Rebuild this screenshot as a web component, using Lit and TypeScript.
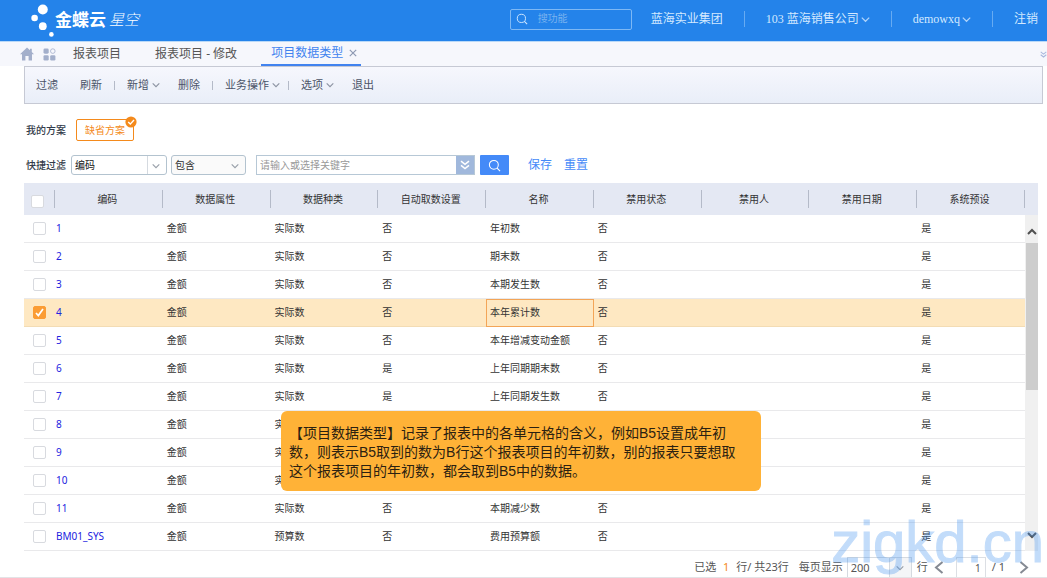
import { LitElement, html, css, svg } from "lit";
import { customElement, state } from "lit/decorators.js";
import { classMap } from "lit/directives/class-map.js";

interface Row {
  code: string;
  attr: string;
  kind: string;
  auto: string;
  name: string;
  disabled: string;
  preset: string;
}

const row = (code: string, name: string, auto = "否", kind = "实际数"): Row => ({
  code,
  attr: "金额",
  kind,
  auto,
  name,
  disabled: "否",
  preset: "是",
});

const ROWS: Row[] = [
  row("1", "年初数"),
  row("2", "期末数"),
  row("3", "本期发生数"),
  row("4", "本年累计数"),
  row("5", "本年增减变动金额"),
  row("6", "上年同期期末数", "是"),
  row("7", "上年同期发生数", "是"),
  row("8", "本年发生数"),
  row("9", "本期借方数"),
  row("10", "本期增加数"),
  row("11", "本期减少数"),
  row("BM01_SYS", "费用预算额", "否", "预算数"),
];

const COLUMNS = ["编码", "数据属性", "数据种类", "自动取数设置", "名称", "禁用状态", "禁用人", "禁用日期", "系统预设"];

const chevron = (w = 8) => html`<svg class="chevron" width=${w} height=${w} viewBox="0 0 8 8" aria-hidden="true">
  <path d="M0.7 2.3 4 5.6 7.3 2.3" fill="none" stroke="currentColor" stroke-width="1.1" />
</svg>`;

const magnifier = (size: number) => html`<svg width=${size} height=${size} viewBox="0 0 14 14" aria-hidden="true">
  <circle cx="6.3" cy="6.3" r="4.8" fill="none" stroke="currentColor" stroke-width="1.1" />
  <path d="M9.8 9.8 13 13" stroke="currentColor" stroke-width="1.2" />
</svg>`;

const doubleChevron = (size: number) => html`<svg width=${size} height=${size} viewBox="0 0 10 10" aria-hidden="true">
  ${svg`<path d="M1 1.2 5 4.4 9 1.2M1 5.4 5 8.6 9 5.4" fill="none" stroke="currentColor" stroke-width="1.5" />`}
</svg>`;

@customElement("app-root")
export class AppRoot extends LitElement {
  @state() private selected = new Set<string>(["4"]);

  static styles = css`
    :host {
      display: block;
      background: #fff;
      color: #333;
      font: 10px/16px "Noto Sans", "Noto Sans CJK SC", sans-serif;
    }
    * {
      box-sizing: border-box;
    }
    button,
    input,
    select {
      font: inherit;
      color: inherit;
      margin: 0;
      padding: 0;
      border: 0;
      background: none;
      border-radius: 0;
      outline: none;
    }
    button {
      cursor: pointer;
    }
    select {
      appearance: none;
      width: 100%;
      height: 100%;
    }
    a {
      text-decoration: none;
      color: inherit;
    }
    svg {
      display: block;
      flex: none;
    }
    .banner {
      display: flex;
      align-items: center;
      height: 42px;
      padding: 0 9px 3px 30px;
      border-bottom: 1px solid #b9d9f8;
      background: #2483ea;
      color: #d3e9ff;
      font-family: "Liberation Serif", "Noto Sans CJK SC", serif;
      font-size: 12px;
      white-space: nowrap;
    }
    .brand {
      display: flex;
      align-items: center;
      margin-right: auto;
      color: #fff;
      font-family: "Noto Sans CJK SC", sans-serif;
    }
    .brand-name {
      margin-right: 3px;
      font-size: 17px;
      font-weight: 700;
    }
    .brand-sub {
      font-size: 15px;
      font-weight: 300;
      font-style: italic;
    }
    .search {
      display: flex;
      align-items: center;
      gap: 10px;
      width: 122px;
      height: 21px;
      margin-right: 19px;
      padding: 0 5px;
      border: 1px solid #7db8f5;
      border-radius: 2px;
    }
    .search input {
      flex: 1;
      min-width: 0;
      font-size: 10px;
    }
    .search input::placeholder {
      color: #79b2ef;
      opacity: 1;
    }
    .split {
      width: 1px;
      height: 16px;
      margin: 0 21px;
      background: #67abf2;
    }
    .account {
      display: flex;
      align-items: center;
      gap: 2px;
    }
    .tabs {
      display: flex;
      align-items: center;
      height: 24px;
      padding-left: 20px;
      background: #f6f7fc;
      color: #555;
      font-size: 12px;
    }
    .tab-icon {
      width: 15px;
      color: #a3afcb;
    }
    .tab-icon + .tab-icon {
      margin: 0 5px 0 8px;
    }
    .tab {
      display: flex;
      align-items: center;
      gap: 6px;
      height: 24px;
      margin-right: 14px;
      padding: 0 10px;
    }
    .tab.current {
      padding-right: 4px;
      border-bottom: 2px solid #4183ef;
      color: #4183ef;
    }
    .close {
      color: #8e9ab3;
    }
    .more {
      margin-left: auto;
      color: #a9b8dd;
    }
    .toolbar {
      display: flex;
      align-items: center;
      height: 38px;
      margin: 0 4px 0 24px;
      border: 1px solid #c6c9d4;
      background: linear-gradient(#f6f7fd, #e9eef8);
      color: #4b5468;
      font-size: 11px;
      white-space: nowrap;
    }
    .toolbar button {
      display: flex;
      align-items: center;
      gap: 3px;
      padding: 0 11px;
    }
    .toolbar .menu {
      padding-right: 7px;
    }
    .chevron {
      opacity: 0.8;
    }
    .toolbar .chevron {
      opacity: 0.6;
    }
    .rule {
      width: 1px;
      height: 9px;
      margin: 0 1px;
      background: #b4bac8;
    }
    .schemes {
      display: flex;
      align-items: center;
      gap: 10px;
      padding: 15px 0 0 26px;
    }
    .caption {
      color: #333b4a;
      font-weight: 500;
    }
    .scheme {
      position: relative;
      width: 58px;
      height: 22px;
      padding-bottom: 1px;
      border: 1px solid #f48a1c;
      border-radius: 2px;
      color: #f48a1c;
    }
    .tick {
      position: absolute;
      top: -4px;
      right: -4px;
    }
    .filters {
      display: flex;
      align-items: center;
      height: 20px;
      margin: 14px 0 8px;
      padding-left: 26px;
    }
    .pick {
      position: relative;
      height: 20px;
      border: 1px solid #b3c3cf;
      border-radius: 3px;
      background: #fff;
      overflow: hidden;
    }
    .pick select {
      padding-left: 3px;
    }
    .pick .chevron {
      position: absolute;
      top: 6px;
      right: 6px;
      color: #7f8894;
      pointer-events: none;
    }
    .field {
      width: 96px;
      margin: 0 4px 0 5px;
    }
    .field select {
      color: #111;
      background: linear-gradient(#d5dae0, #d5dae0) right 18px top / 1px 100% no-repeat;
    }
    .operator {
      width: 75px;
      margin-right: 10px;
      background: #fafafa;
    }
    .keyword {
      display: flex;
      width: 219px;
      height: 20px;
      margin-right: 5px;
      border: 1px solid #b7c8d6;
    }
    .keyword input {
      flex: 1;
      min-width: 0;
      padding-left: 3px;
    }
    .keyword input::placeholder {
      color: #999;
      opacity: 1;
    }
    .expand {
      display: grid;
      place-items: center;
      width: 18px;
      background: #a0b8dc;
      color: #fff;
    }
    .go {
      display: grid;
      place-items: center;
      width: 29px;
      height: 20px;
      border-radius: 1px;
      background: #448af8;
      color: #fff;
    }
    .filters a {
      color: #448af8;
      font-size: 12px;
      line-height: 20px;
    }
    .filters .save {
      margin: 0 12px 0 19px;
    }
    .grid {
      display: flex;
      position: relative;
      margin: 0 9px 0 24px;
    }
    table {
      flex: 1;
      width: 100%;
      table-layout: fixed;
      border-collapse: separate;
      border-spacing: 0;
    }
    th,
    td {
      font-weight: 400;
      white-space: nowrap;
    }
    th {
      height: 32px;
      padding: 0 3px 0 0;
      background: linear-gradient(#b4bac8, #b4bac8) right center / 1px 18px no-repeat #e4e8f3;
    }
    td {
      height: 28px;
      padding: 0 0 1px 4px;
      border-bottom: 1px solid #e9e9eb;
      text-align: left;
    }
    .check {
      width: 31px;
      padding: 0;
      text-align: center;
    }
    .check input {
      display: block;
      appearance: none;
      width: 13px;
      height: 13px;
      margin: 0 9px;
      border: 1px solid #d8dadf;
      border-radius: 2px;
      background: #fff;
    }
    th.check input {
      margin: 4px 7px 0;
    }
    .check input:checked {
      border-color: #fb9c33;
      background: #fb9c33
        url("data:image/svg+xml,%3Csvg xmlns='http://www.w3.org/2000/svg' viewBox='0 0 11 11'%3E%3Cpath d='M2 6 4.3 8.6 9 2' fill='none' stroke='white' stroke-width='1.7'/%3E%3C/svg%3E");
    }
    .code {
      padding-left: 1px;
      color: #2222e0;
    }
    .picked td {
      border-color: #f3dcb4;
      background: #fee8c2;
    }
    .picked .name {
      padding-left: 3px;
      padding-bottom: 2px;
      border: 1px solid #f3a557;
    }
    .scroller {
      display: flex;
      flex-direction: column;
      width: 13px;
      padding-left: 1px;
      background: linear-gradient(#e4e8f3 32px, #f0f0f0 32px);
      color: #505050;
    }
    .scroller button {
      display: grid;
      place-items: center;
      height: 28px;
    }
    .scroller .up {
      margin-top: 32px;
      padding-top: 6px;
    }
    .scroller .thumb {
      height: 147px;
      background: #cdcdcd;
    }
    .scroller .down {
      margin-top: auto;
      padding-bottom: 4px;
    }
    .note {
      position: absolute;
      left: 257px;
      top: 228px;
      width: 480px;
      margin: 0;
      padding: 13px 8px 10px;
      border-radius: 6px;
      background: #ffb237;
      color: #2b2111;
      font: 14px/19px "Liberation Sans", "Noto Sans CJK SC", sans-serif;
    }
    .note span {
      display: block;
      white-space: nowrap;
    }
    .mark {
      position: absolute;
      z-index: 1;
      right: -6px;
      bottom: -23px;
      color: #4a97f0;
      opacity: 0.33;
      font: 58px/64px "Liberation Sans", sans-serif;
      -webkit-text-stroke: 1px #4a97f0;
      pointer-events: none;
    }
    .pager {
      display: flex;
      align-items: flex-end;
      justify-content: flex-end;
      height: 27px;
      padding-right: 17px;
      border-bottom: 1px solid #e3e3e6;
      color: #555;
      font-size: 11px;
      line-height: 20px;
      white-space: nowrap;
    }
    .count {
      margin: 0 4px;
      color: #f48a1c;
      font-weight: 400;
    }
    .size-label {
      margin: 0 4px 0 10px;
    }
    .size {
      width: 65px;
      margin-right: 5px;
      border-color: #d5dae0;
      border-bottom: 0;
      border-radius: 0;
    }
    .size select {
      background: linear-gradient(90deg, #d5dae0 1px, #f4f5f7 1px) right top / 22px 100% no-repeat;
    }
    .size .chevron {
      right: 7px;
    }
    .step {
      display: grid;
      place-items: center;
      width: 12px;
      height: 20px;
      color: #858a93;
    }
    .prev {
      margin-left: 5px;
    }
    .page {
      width: 30px;
      height: 20px;
      margin: 0 6px 0 11px;
      padding-right: 4px;
      border: 1px solid #dcdfe4;
      border-bottom: 0;
      font-size: 10px;
      text-align: right;
    }
    .total {
      margin-right: 13px;
    }
  `;

  private toggle(code: string) {
    const next = new Set(this.selected);
    next.has(code) ? next.delete(code) : next.add(code);
    this.selected = next;
  }

  private renderBanner() {
    return html`<header class="banner">
      <div class="brand">
        <svg width="25" height="36" viewBox="0 0 25 36" aria-hidden="true">
          <g fill="#fff">
            <circle cx="12.8" cy="8.5" r="5" />
            <circle cx="4.6" cy="17" r="3.3" />
            <circle cx="12.8" cy="25.2" r="3.9" />
            <circle cx="21.4" cy="33.4" r="2.3" />
          </g>
        </svg>
        <span class="brand-name">金蝶云</span>
        <span class="brand-sub">星空</span>
      </div>
      <label class="search">${magnifier(12)}<input type="text" placeholder="搜功能" aria-label="搜功能" /></label>
      <a href="#">蓝海实业集团</a>
      <span class="split"></span>
      <button class="account">103 蓝海销售公司${chevron(9)}</button>
      <span class="split"></span>
      <button class="account">demowxq${chevron(9)}</button>
      <span class="split"></span>
      <a href="#">注销</a>
    </header>`;
  }

  private renderTabs() {
    return html`<nav class="tabs">
      <button class="tab-icon" aria-label="首页">
        <svg width="14" height="14" viewBox="0 0 14 14">
          <path fill="currentColor" d="M7 .5 10 3.3V1.8h1.8V5L14 7.2H12V13.5H8.6V9H5.4V13.5H2V7.2H0Z" />
        </svg>
      </button>
      <button class="tab-icon" aria-label="应用">
        <svg width="13" height="13" viewBox="0 0 13 13">
          <g fill="currentColor">
            <rect x=".5" y=".5" width="5.2" height="5.2" rx="1.4" />
            <rect x=".5" y="7.2" width="5.2" height="5.2" rx="1.2" />
            <rect x="7.2" y="7.2" width="5.2" height="5.2" rx="1.2" />
          </g>
          <circle cx="9.8" cy="3.1" r="2.3" fill="none" stroke="currentColor" stroke-width=".8" />
        </svg>
      </button>
      <a class="tab" href="#">报表项目</a>
      <a class="tab" href="#">报表项目 - 修改</a>
      <a class="tab current" href="#">
        项目数据类型
        <svg class="close" width="8" height="8" viewBox="0 0 8 8">
          <path d="M.8.8 7.2 7.2M7.2.8.8 7.2" stroke="currentColor" stroke-width="1.2" />
        </svg>
      </a>
      <button class="more" aria-label="更多">${doubleChevron(7)}</button>
    </nav>`;
  }

  private renderToolbar() {
    return html`<div class="toolbar">
      <button>过滤</button>
      <button>刷新</button>
      <span class="rule"></span>
      <button class="menu">新增${chevron()}</button>
      <button>删除</button>
      <span class="rule"></span>
      <button class="menu">业务操作${chevron()}</button>
      <span class="rule"></span>
      <button class="menu">选项${chevron()}</button>
      <button>退出</button>
    </div>`;
  }

  private renderFilters() {
    return html`<section class="schemes">
        <span class="caption">我的方案</span>
        <button class="scheme">
          缺省方案
          <svg class="tick" width="12" height="12" viewBox="0 0 12 12">
            <circle cx="6" cy="6" r="5.6" fill="#f48a1c" />
            <path d="M3.2 6 5.3 8.1 9 4" fill="none" stroke="#fff" stroke-width="1.4" />
          </svg>
        </button>
      </section>
      <section class="filters">
        <label class="caption" for="field">快捷过滤</label>
        <div class="pick field">
          <select id="field"><option>编码</option></select>${chevron()}
        </div>
        <div class="pick operator">
          <select aria-label="条件"><option>包含</option></select>${chevron()}
        </div>
        <div class="keyword">
          <input type="text" placeholder="请输入或选择关键字" aria-label="关键字" />
          <button class="expand" aria-label="展开">${doubleChevron(10)}</button>
        </div>
        <button class="go" aria-label="查询">${magnifier(13)}</button>
        <a class="save" href="#">保存</a>
        <a href="#">重置</a>
      </section>`;
  }

  private renderRow(r: Row) {
    const on = this.selected.has(r.code);
    return html`<tr class=${classMap({ picked: on })}>
      <td class="check">
        <input type="checkbox" aria-label=${r.code} .checked=${on} @change=${() => this.toggle(r.code)} />
      </td>
      <td class="code"><a href="#">${r.code}</a></td>
      <td>${r.attr}</td>
      <td>${r.kind}</td>
      <td>${r.auto}</td>
      <td class="name">${r.name}</td>
      <td>${r.disabled}</td>
      <td></td>
      <td></td>
      <td>${r.preset}</td>
    </tr>`;
  }

  private renderGrid() {
    return html`<section class="grid">
      <table>
        <thead>
          <tr>
            <th class="check"><input type="checkbox" aria-label="全选" /></th>
            ${COLUMNS.map((c) => html`<th>${c}</th>`)}
          </tr>
        </thead>
        <tbody>
          ${ROWS.map((r) => this.renderRow(r))}
        </tbody>
      </table>
      <div class="scroller">
        <button class="up" aria-label="向上">
          <svg width="10" height="8" viewBox="0 0 10 8">
            <path d="M1 6 5 2 9 6" fill="none" stroke="currentColor" stroke-width="2" />
          </svg>
        </button>
        <div class="thumb"></div>
        <button class="down" aria-label="向下">
          <svg width="10" height="8" viewBox="0 0 10 8">
            <path d="M1 2 5 6 9 2" fill="none" stroke="currentColor" stroke-width="2" />
          </svg>
        </button>
      </div>
      <p class="note">
        <span>【项目数据类型】记录了报表中的各单元格的含义，例如B5设置成年初</span>
        <span>数，则表示B5取到的数为B行这个报表项目的年初数，别的报表只要想取</span>
        <span>这个报表项目的年初数，都会取到B5中的数据。</span>
      </p>
      <span class="mark">zigkd.cn</span>
    </section>`;
  }

  private renderPager() {
    return html`<footer class="pager">
      <span>已选 <b class="count">1</b> 行/ 共23行</span>
      <label class="size-label" for="size">每页显示</label>
      <div class="pick size">
        <select id="size"><option>200</option></select>${chevron()}
      </div>
      <span>行</span>
      <button class="step prev" aria-label="上一页">
        <svg width="10" height="13" viewBox="0 0 10 13">
          <path d="M8.5 1 2 6.5 8.5 12" fill="none" stroke="currentColor" stroke-width="2" />
        </svg>
      </button>
      <input class="page" type="text" value="1" aria-label="页码" />
      <span class="total">/ 1</span>
      <button class="step next" aria-label="下一页">
        <svg width="10" height="13" viewBox="0 0 10 13">
          <path d="M1.5 1 8 6.5 1.5 12" fill="none" stroke="currentColor" stroke-width="2" />
        </svg>
      </button>
    </footer>`;
  }

  render() {
    return html`${this.renderBanner()} ${this.renderTabs()} ${this.renderToolbar()} ${this.renderFilters()}
    ${this.renderGrid()} ${this.renderPager()}`;
  }
}
